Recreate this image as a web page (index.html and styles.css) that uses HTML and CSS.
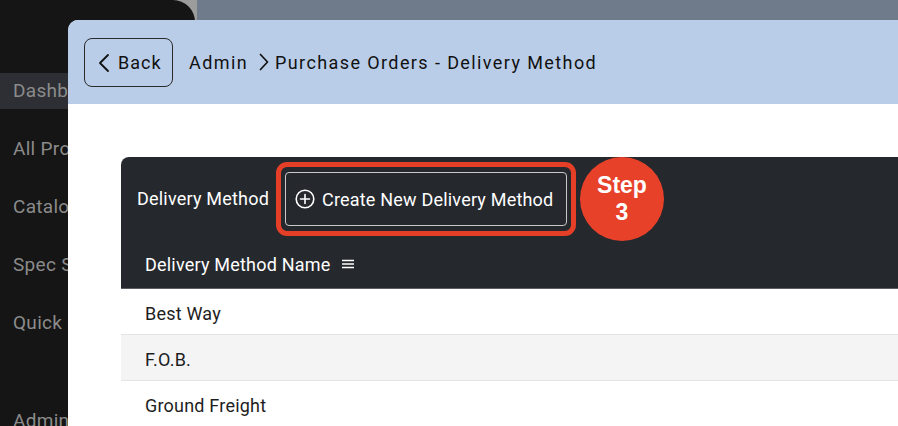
FILE: index.html
```html
<!DOCTYPE html>
<html>
<head>
<meta charset="utf-8">
<link rel="stylesheet" href="styles.css">
</head>
<body>
<div class="app">
  <aside class="side-wrap">
    <nav class="sidebar">
      <div class="nav-item active">Dashboard</div>
      <div class="nav-item">All Products</div>
      <div class="nav-item">Catalogs</div>
      <div class="nav-item">Spec Sheets</div>
      <div class="nav-item">Quick Quote</div>
      <div class="nav-item admin">Admin</div>
    </nav>
  </aside>
  <div class="backdrop"></div>

  <section class="modal">
    <header class="modal-head">
      <button class="back-btn">
        <svg width="12" height="20" viewBox="0 0 12 20"><path d="M10 2 L2 10 L10 18" fill="none" stroke="#111" stroke-width="1.8" stroke-linecap="round" stroke-linejoin="round"/></svg>
        <span>Back</span>
      </button>
      <div class="crumbs">
        <span>Admin</span>
        <svg class="crumb-sep" width="10" height="20" viewBox="0 0 10 20"><path d="M1.5 2.5 L8.5 10 L1.5 17.5" fill="none" stroke="#111" stroke-width="1.7" stroke-linecap="round" stroke-linejoin="round"/></svg>
        <span>Purchase Orders - Delivery Method</span>
      </div>
    </header>
    <div class="modal-body">
      <div class="panel">
        <div class="toolbar">
          <span class="tb-title">Delivery Method</span>
          <div class="highlight">
            <button class="create-btn">
              <svg width="20" height="20" viewBox="0 0 20 20"><circle cx="10" cy="10" r="8.8" fill="none" stroke="#fff" stroke-width="1.6"/><path d="M10 5.5 V14.5 M5.5 10 H14.5" stroke="#fff" stroke-width="1.6" stroke-linecap="round"/></svg>
              <span>Create New Delivery Method</span>
            </button>
          </div>
          <div class="step">Step<br>3</div>
        </div>
        <div class="col-head">
          <span>Delivery Method Name</span>
          <svg width="14" height="12" viewBox="0 0 14 12"><path d="M1 2.5 H13 M1 6 H13 M1 9.5 H13" stroke="#fff" stroke-width="1.4"/></svg>
        </div>
      </div>
      <div class="rows">
        <div class="row">Best Way</div>
        <div class="row alt">F.O.B.</div>
        <div class="row">Ground Freight</div>
      </div>
    </div>
  </section>
</div>
</body>
</html>
```
FILE: styles.css
```css
* { box-sizing: border-box; }
html, body { margin: 0; padding: 0; }
body {
  width: 898px;
  height: 426px;
  overflow: hidden;
  font-family: Roboto, "Liberation Sans", sans-serif;
  background: #6f7a8b;
}
.app {
  position: relative;
  width: 898px;
  height: 426px;
  display: flex;
}
.side-wrap {
  width: 197px;
  height: 426px;
  background: #9c9c9c;
  flex: none;
}
.sidebar {
  width: 195px;
  height: 426px;
  background: #151515;
  border-top-right-radius: 22px;
  padding-top: 73px;
  overflow: hidden;
}
.nav-item {
  height: 36px;
  line-height: 36px;
  padding-left: 13px;
  margin-bottom: 22px;
  font-size: 19px;
  color: #8b8b8b;
  white-space: nowrap;
  letter-spacing: 0.3px;
}
.nav-item.active { background: #2d2f34; }
.nav-item.admin { margin-top: 62px; }
.backdrop { flex: 1; }

.modal {
  position: absolute;
  left: 68px;
  top: 20px;
  right: 0;
  bottom: 0;
  background: #fff;
  border-top-left-radius: 10px;
  overflow: hidden;
  display: flex;
  flex-direction: column;
}
.modal-head {
  height: 84px;
  background: #b9cde8;
  display: flex;
  align-items: center;
  padding-left: 16px;
  gap: 16px;
  flex: none;
}
.back-btn {
  height: 49px;
  width: 89px;
  border: 1px solid #2a2a2a;
  border-radius: 8px;
  background: transparent;
  display: flex;
  align-items: center;
  padding: 0 0 0 13px;
  gap: 8px;
  font-family: inherit;
  font-size: 18px;
  color: #111;
  letter-spacing: 1px;
  margin-top: 1px;
}
.crumbs {
  display: flex;
  align-items: center;
  font-size: 18px;
  color: #111;
  letter-spacing: 1.4px;
}
.crumb-sep { margin: 0 6px 0 11px; }
.modal-body {
  flex: 1;
  padding: 53px 0 0 53px;
}
.panel {
  background: #25292e;
  border-top-left-radius: 8px;
  border-bottom: 1px solid #5a5e63;
}
.toolbar {
  height: 83px;
  display: flex;
  align-items: center;
  padding-left: 16px;
}
.tb-title {
  font-size: 18px;
  letter-spacing: 0.2px;
  color: #fff;
  margin-right: 7px;
}
.highlight {
  width: 300px;
  height: 74px;
  border: 5px solid #e63f27;
  border-radius: 11px;
  padding: 5px 4px;
  margin-top: 1px;
}
.create-btn {
  width: 100%;
  height: 100%;
  border: 1px solid #c9c9c9;
  border-radius: 4px;
  background: #25292e;
  display: flex;
  align-items: center;
  padding: 0 0 0 9px;
  gap: 7px;
  font-family: inherit;
  font-size: 18px;
  letter-spacing: 0.2px;
  color: #fff;
}
.step {
  width: 84px;
  height: 84px;
  border-radius: 50%;
  background: #e8412a;
  color: #fff;
  font-family: "Liberation Sans", Arial, sans-serif;
  font-weight: bold;
  font-size: 23px;
  line-height: 27px;
  text-align: center;
  display: flex;
  align-items: center;
  justify-content: center;
  margin-left: 4px;
}
.col-head {
  height: 48px;
  display: flex;
  align-items: center;
  padding-left: 24px;
  gap: 11px;
  font-size: 18px;
  letter-spacing: 0.2px;
  color: #fff;
}
.row {
  height: 46px;
  line-height: 46px;
  padding: 2px 0 0 24px;
  font-size: 18px;
  letter-spacing: 0.2px;
  color: #1e1e1e;
  border-bottom: 1px solid #e4e4e6;
}
.row.alt { background: #f4f4f5; }
```
